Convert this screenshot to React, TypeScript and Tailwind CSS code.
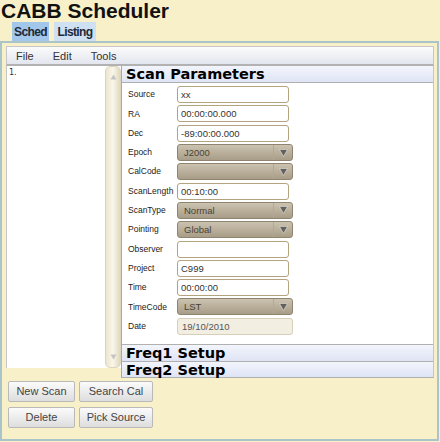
import React from "react";

interface Field {
    label: string;
    kind: "input" | "select" | "date";
    value: string;
}

const fields: Field[] = [
    { label: "Source", kind: "input", value: "xx" },
    { label: "RA", kind: "input", value: "00:00:00.000" },
    { label: "Dec", kind: "input", value: "-89:00:00.000" },
    { label: "Epoch", kind: "select", value: "J2000" },
    { label: "CalCode", kind: "select", value: "" },
    { label: "ScanLength", kind: "input", value: "00:10:00" },
    { label: "ScanType", kind: "select", value: "Normal" },
    { label: "Pointing", kind: "select", value: "Global" },
    { label: "Observer", kind: "input", value: "" },
    { label: "Project", kind: "input", value: "C999" },
    { label: "Time", kind: "input", value: "00:00:00" },
    { label: "TimeCode", kind: "select", value: "LST" },
    { label: "Date", kind: "date", value: "19/10/2010" },
];

const Arrow = ({ up, color }: { up?: boolean; color: string }) => (
    <svg width="7" height="6" viewBox="0 0 7 6">
        <path d={up ? "M3.5 0.5 L6.5 5.5 L0.5 5.5 Z" : "M0.5 0.5 L6.5 0.5 L3.5 5.5 Z"} fill={color} />
    </svg>
);

const FieldControl = ({ field }: { field: Field }) => {
    if (field.kind === "select") {
        return (
            <div className="flex h-[17px] w-[116px] rounded-[3px] border border-[#8f846f] bg-linear-to-b from-[#cbc2b0] to-[#a89d87] text-[9.5px] text-[#4a4234]">
                <div className="flex-1 pl-[6px] leading-[15px]">{field.value}</div>
                <div className="flex w-[19px] items-center justify-center border-l border-[#b3a993]">
                    <svg width="9" height="8" viewBox="0 0 9 8">
                        <path d="M0.5 0.5 L8.5 0.5 L4.5 7.5 Z" fill="#606060" stroke="#e8e4da" strokeWidth="0.6" />
                    </svg>
                </div>
            </div>
        );
    }
    if (field.kind === "date") {
        return (
            <div className="h-[17px] w-[116px] rounded-[3px] border border-[#d8cfb8] bg-[#f2eee2] pl-[4px] text-[9.5px] leading-[15px] text-[#555]">
                {field.value}
            </div>
        );
    }
    return (
        <div className="h-[17px] w-[112px] rounded-[3px] border border-[#b3a37f] bg-white pl-[3px] text-[9.5px] leading-[15px] text-[#333]">
            {field.value}
        </div>
    );
};

const SectionHeader = ({ title, className }: { title: string; className?: string }) => (
    <div
        className={`bg-linear-to-b from-[#f3f5fc] to-[#dfe4f5] pl-[4px] font-['DejaVu_Sans',sans-serif] text-[14.5px] font-bold leading-[16px] text-black ${className ?? ""}`}
    >
        {title}
    </div>
);

const Button = ({ label, width }: { label: string; width: string }) => (
    <div
        className={`${width} flex h-[21px] items-center justify-center rounded-[2px] border border-[#b9b9b9] bg-linear-to-b from-[#fbfbfb] to-[#dedede] text-[11px] text-[#444]`}
    >
        {label}
    </div>
);

const App = () => {
    return (
        <div className="h-[442px] w-[440px] overflow-hidden bg-[#f8f0c9] font-['Liberation_Sans',Arial,sans-serif]">
            <h1 className="h-[22px] pl-[1px] text-[21px] font-bold leading-[22px] text-[#111]">CABB Scheduler</h1>

            <div className="flex h-[19px] gap-[5px] pl-[12px] text-[12px] font-bold tracking-[-0.6px] text-[#1d2a38]">
                <div className="flex w-[37px] items-center justify-center bg-[#a3c6eb]">Sched</div>
                <div className="flex w-[42px] items-center justify-center bg-[#cfe0f2]">Listing</div>
            </div>

            <div className="h-[400px] w-[439px] border-2 border-[#a9c5c9]">
                <div className="ml-[4px] mt-[3px] w-[428px]">
                    {/* menu bar */}
                    <div className="flex h-[20px] items-center gap-[19px] border border-b-2 border-[#c6c6c6] border-b-[#b2b2b2] bg-linear-to-b from-[#fbfbfb] to-[#e3e6ee] pl-[9px] pt-[2px] text-[11px] text-[#333]">
                        <span>File</span>
                        <span>Edit</span>
                        <span>Tools</span>
                    </div>

                    <div className="flex items-start">
                        {/* scan list */}
                        <div className="flex h-[302px] w-[115px] border-l border-[#c6c6c6] bg-white">
                            <div className="flex-1 pl-[2px] pt-[1px] font-['DejaVu_Sans',sans-serif] text-[8px] text-[#333]">1.</div>
                            <div className="flex w-[16px] flex-col items-center justify-between rounded-[5px] border border-[#ddd5bb] bg-linear-to-r from-[#ece6cf] via-[#f9f6ea] to-[#e0d9bf] py-[7px]">
                                <Arrow up color="#c4c4c4" />
                                <Arrow color="#c4c4c4" />
                            </div>
                        </div>

                        {/* scan parameters */}
                        <div className="w-[313px] border-x border-b border-l-[#a8a8a8] border-r-[#c6c6c6] border-b-[#b0b0b0] bg-white">
                            <SectionHeader title="Scan Parameters" className="h-[17px] border-b border-[#b0b0b0]" />
                            <div className="flex h-[261px] flex-col pl-[6px] pt-[2px]">
                                {fields.map((field) => (
                                    <div key={field.label} className="flex h-[19.3px] items-center">
                                        <div className="w-[49px] text-[8.5px] text-[#222]">{field.label}</div>
                                        <FieldControl field={field} />
                                    </div>
                                ))}
                            </div>
                            <SectionHeader title="Freq1 Setup" className="h-[17px] border-t border-[#b0b0b0]" />
                            <SectionHeader title="Freq2 Setup" className="h-[16px] border-t border-[#b0b0b0]" />
                        </div>
                    </div>

                    {/* buttons */}
                    <div className="ml-[2px] mt-[3px] grid w-fit grid-cols-[67px_74px] gap-x-[4px] gap-y-[5px]">
                        <Button label="New Scan" width="w-[67px]" />
                        <Button label="Search Cal" width="w-[74px]" />
                        <Button label="Delete" width="w-[67px]" />
                        <Button label="Pick Source" width="w-[74px]" />
                    </div>
                </div>
            </div>
        </div>
    );
};

export default App;
